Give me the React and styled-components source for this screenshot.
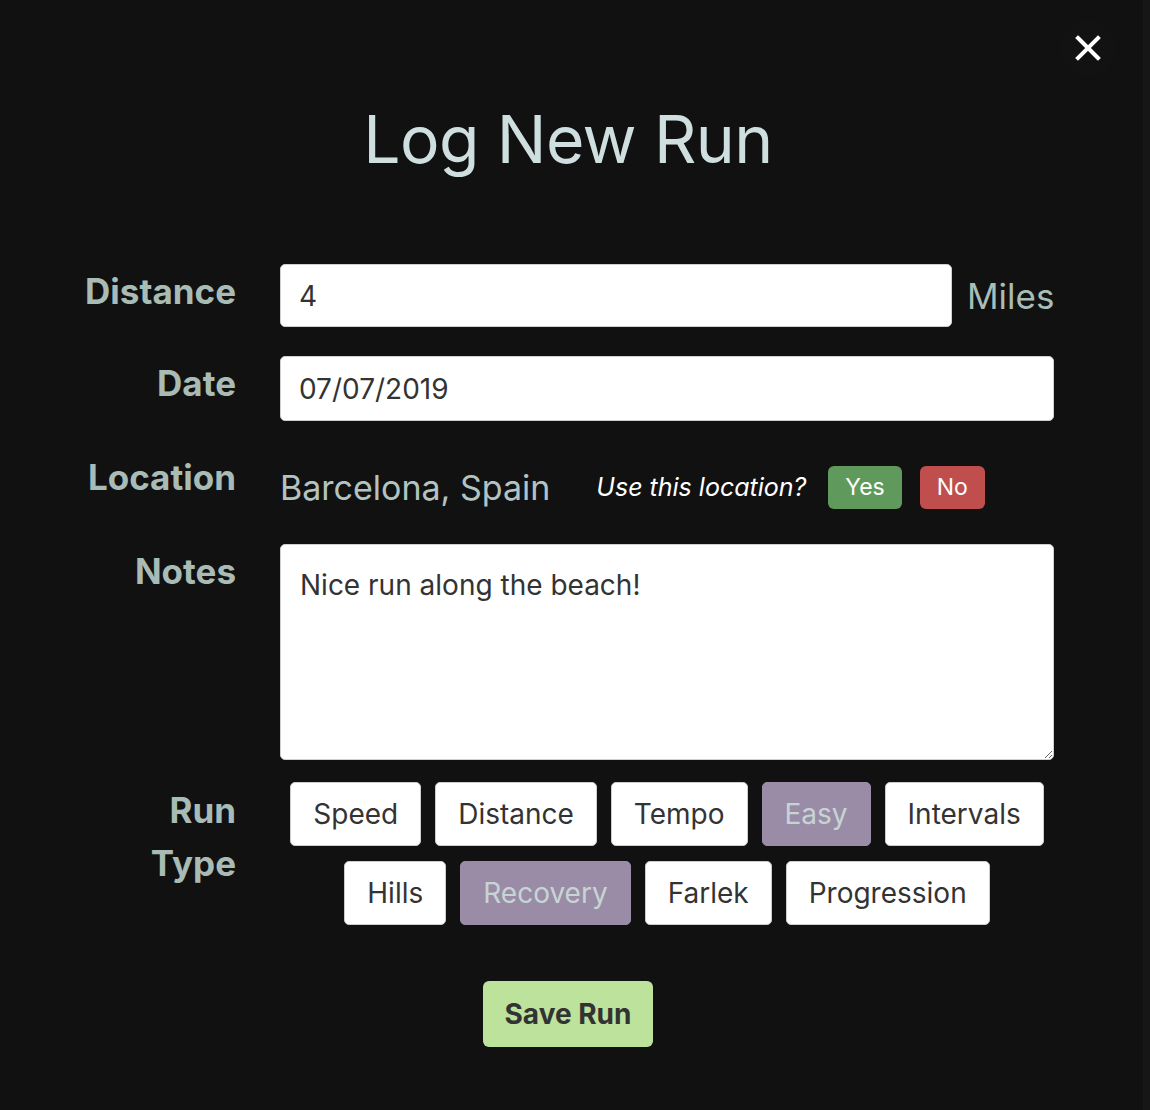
import React from "react";
import styled, { createGlobalStyle } from "styled-components";

const RUN_TYPES = [
  "Speed",
  "Distance",
  "Tempo",
  "Easy",
  "Intervals",
  "Hills",
  "Recovery",
  "Farlek",
  "Progression",
];
const SELECTED = ["Easy", "Recovery"];

const GlobalStyle = createGlobalStyle`
  body {
    margin: 0;
    background: #111111;
    font-family: Inter, "Noto Sans", "Liberation Sans", sans-serif;
  }
`;

export default function App() {
  const [location, setLocation] = React.useState(null);
  const [types, setTypes] = React.useState(SELECTED);

  const toggleType = (t) =>
    setTypes((prev) =>
      prev.includes(t) ? prev.filter((x) => x !== t) : [...prev, t]
    );

  return (
    <Page>
      <GlobalStyle />
      <Modal>
        <CloseButton aria-label="close">
          <svg width="26" height="26" viewBox="0 0 26 26">
            <path
              d="M3 3 L23 23 M23 3 L3 23"
              stroke="#ffffff"
              strokeWidth="4"
              strokeLinecap="square"
            />
          </svg>
        </CloseButton>

        <Title>Log New Run</Title>

        <Form onSubmit={(e) => e.preventDefault()}>
          <Row>
            <Label>Distance</Label>
            <Field>
              <TextInput defaultValue="4" $short />
              <Unit>Miles</Unit>
            </Field>
          </Row>

          <Row>
            <Label>Date</Label>
            <TextInput defaultValue="07/07/2019" />
          </Row>

          <Row $gap={20}>
            <Label>Location</Label>
            <LocationBox>
              <Place>Barcelona, Spain</Place>
              <Question>Use this location?</Question>
              <ChoiceButton type="button" $color="#5f9a5c" onClick={() => setLocation(true)}>
                Yes
              </ChoiceButton>
              <ChoiceButton type="button" $color="#bf4e4d" onClick={() => setLocation(false)}>
                No
              </ChoiceButton>
            </LocationBox>
          </Row>

          <Row $gap={22}>
            <Label>Notes</Label>
            <Notes defaultValue="Nice run along the beach!" />
          </Row>

          <Row $gap={56}>
            <Label $tall>
              Run
              <br />
              Type
            </Label>
            <TypeList>
              {RUN_TYPES.map((t) => (
                <TypeButton
                  key={t}
                  type="button"
                  $active={types.includes(t)}
                  onClick={() => toggleType(t)}
                >
                  {t}
                </TypeButton>
              ))}
            </TypeList>
          </Row>

          <SaveRow>
            <SaveButton type="submit">Save Run</SaveButton>
          </SaveRow>
        </Form>
      </Modal>
      <Behind />
    </Page>
  );
}

const Page = styled.div`
  display: flex;
  min-height: 1110px;
  background: #111111;
`;

const Modal = styled.div`
  position: relative;
  width: 1136px;
  flex-shrink: 0;
  background: #111111;
`;

const Behind = styled.div`
  margin-left: 7px;
  flex: 1;
  background: #161616;
`;

const CloseButton = styled.button`
  position: absolute;
  top: 20px;
  left: 1060px;
  width: 56px;
  height: 56px;
  border: none;
  border-radius: 50%;
  background: #121212;
  display: flex;
  align-items: center;
  justify-content: center;
  padding: 0;
  cursor: pointer;
`;

const Title = styled.h1`
  margin: 0;
  padding-top: 98px;
  text-align: center;
  font-size: 66px;
  font-weight: 400;
  line-height: 82px;
  letter-spacing: -0.6px;
  color: #cfdfdf;
`;

const Form = styled.form`
  margin-top: 84px;
`;

const Row = styled.div`
  display: grid;
  grid-template-columns: 236px 774px;
  column-gap: 44px;
  align-items: start;
  margin-bottom: ${(p) => p.$gap ?? 29}px;
`;

const Label = styled.div`
  text-align: right;
  font-size: 35px;
  font-weight: 700;
  line-height: ${(p) => (p.$tall ? "53px" : "41px")};
  padding-top: ${(p) => (p.$tall ? "2px" : "7px")};
  color: #a8bbb5;
`;

const Field = styled.div`
  display: flex;
  align-items: center;
  gap: 15px;
`;

const TextInput = styled.input`
  box-sizing: border-box;
  flex-shrink: 0;
  width: ${(p) => (p.$short ? "672px" : "100%")};
  height: ${(p) => (p.$short ? "63px" : "65px")};
  padding: 0 18px;
  border: 1px solid #cfcfcf;
  border-radius: 5px;
  background: #ffffff;
  font-family: inherit;
  font-size: 28px;
  color: #333333;
  outline: none;
`;

const Unit = styled.span`
  font-size: 35px;
  color: #a9bdb8;
`;

const LocationBox = styled.div`
  display: flex;
  align-items: center;
  height: 74px;
  box-sizing: border-box;
`;

const Place = styled.span`
  font-size: 34px;
  color: #b3c3c1;
  margin-right: 46px;
`;

const Question = styled.span`
  font-size: 25px;
  font-style: italic;
  color: #ffffff;
  margin-right: 22px;
`;

const ChoiceButton = styled.button`
  height: 43px;
  padding: 0 17px;
  margin-right: 18px;
  border: none;
  border-radius: 6px;
  background: ${(p) => p.$color};
  color: #ffffff;
  font-family: inherit;
  font-size: 23px;
  cursor: pointer;
`;

const Notes = styled.textarea`
  box-sizing: border-box;
  width: 100%;
  height: 216px;
  padding: 22px 19px;
  border: 1px solid #cfcfcf;
  border-radius: 5px;
  background: #ffffff;
  font-family: inherit;
  font-size: 28px;
  line-height: 36px;
  color: #333333;
  outline: none;
`;

const TypeList = styled.div`
  display: flex;
  flex-wrap: wrap;
  justify-content: center;
  column-gap: 14px;
  row-gap: 15px;
`;

const TypeButton = styled.button`
  height: 64px;
  padding: 0 22px;
  border: 1px solid ${(p) => (p.$active ? "#9a8ca6" : "#cccccc")};
  border-radius: 5px;
  background: ${(p) => (p.$active ? "#9a8ca6" : "#ffffff")};
  color: ${(p) => (p.$active ? "#c6d5d4" : "#333333")};
  font-family: inherit;
  font-size: 28px;
  cursor: pointer;
`;

const SaveRow = styled.div`
  display: flex;
  justify-content: center;
`;

const SaveButton = styled.button`
  height: 66px;
  padding: 0 22px;
  border: none;
  border-radius: 6px;
  background: #bde29c;
  color: #333333;
  font-family: inherit;
  font-size: 28px;
  font-weight: 700;
  cursor: pointer;
`;
